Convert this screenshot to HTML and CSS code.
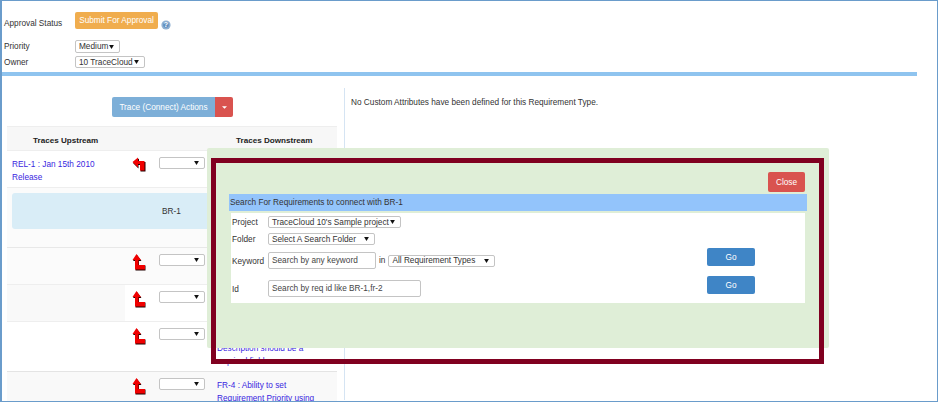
FILE: index.html
```html
<!DOCTYPE html>
<html lang="en">
<head>
<meta charset="utf-8">
<title>Requirement BR-1</title>
<link rel="stylesheet" href="styles.css">
</head>
<body>
<div class="frame">
  <header class="top">
    <div class="status-row">
      <span class="label">Approval Status</span>
      <button class="btn btn-orange">Submit For Approval</button>
      <svg class="help" viewBox="0 0 10 10"><circle cx="5" cy="5" r="4.6" fill="#8fb0d2"/><circle cx="5" cy="5" r="2.8" fill="#5f8fc0"/><text x="5" y="7.4" text-anchor="middle" class="help-q">?</text></svg>
    </div>
    <div class="field-row">
      <span class="label">Priority</span>
      <span class="sel sel-priority">Medium<svg class="caret" viewBox="0 0 6 5"><path d="M0 0h6L3 5z"/></svg></span>
    </div>
    <div class="field-row field-row-owner">
      <span class="label">Owner</span>
      <span class="sel sel-owner">10 TraceCloud<svg class="caret" viewBox="0 0 6 5"><path d="M0 0h6L3 5z"/></svg></span>
    </div>
  </header>
  <div class="rule"></div>
  <main class="content">
    <section class="left">
      <div class="actions">
        <button class="btn btn-trace">Trace (Connect) Actions</button>
        <button class="btn btn-drop"><svg class="drop-caret" viewBox="0 0 6 3"><path d="M0 0h6L3 3z"/></svg></button>
      </div>
      <div class="trace-table">
        <div class="row row-head">
          <div class="cell-up">Traces Upstream</div>
          <div></div>
          <div></div>
          <div class="cell-down">Traces Downstream</div>
        </div>
        <div class="row row-1">
          <div class="cell-up"><a class="link">REL-1 : Jan 15th 2010 Release</a></div>
          <div class="cell-icon"><svg class="arrow" viewBox="0 0 14 15"><path class="arrow-shadow" d="M7 1.500v3.500h6.500v9.500h-5v-6.500h-2v3.500l-5.500-5.500z"/><path class="arrow-fill" d="M6 0.500v3.500h6.500v9.500h-4.500v-6.500h-2v3.500l-5.500-5.500z"/></svg></div>
          <div class="cell-sel"><span class="sel sel-empty"><svg class="caret" viewBox="0 0 6 5"><path d="M0 0h6L3 5z"/></svg></span></div>
          <div></div>
        </div>
        <div class="row-self"><div class="self-panel">BR-1</div></div>
        <div class="row row-3">
          <div></div>
          <div class="cell-icon"><svg class="arrow arrow-up" viewBox="0 0 14 17"><path class="arrow-shadow" d="M5 1l4.500 6h-2.500v4.500h6.500v5h-10v-9.500h-2.500z"/><path class="arrow-fill" d="M4.500 0l4.500 6h-2.500v5h6.500v4.500h-10v-9.500h-2.500z"/></svg></div>
          <div class="cell-sel"><span class="sel sel-empty"><svg class="caret" viewBox="0 0 6 5"><path d="M0 0h6L3 5z"/></svg></span></div>
          <div></div>
        </div>
        <div class="row row-4">
          <div class="row-4-fill"></div>
          <div class="cell-icon"><svg class="arrow arrow-up" viewBox="0 0 14 17"><path class="arrow-shadow" d="M5 1l4.500 6h-2.500v4.500h6.500v5h-10v-9.500h-2.500z"/><path class="arrow-fill" d="M4.500 0l4.500 6h-2.500v5h6.500v4.500h-10v-9.500h-2.500z"/></svg></div>
          <div class="cell-sel"><span class="sel sel-empty"><svg class="caret" viewBox="0 0 6 5"><path d="M0 0h6L3 5z"/></svg></span></div>
          <div></div>
        </div>
        <div class="row row-5">
          <div></div>
          <div class="cell-icon"><svg class="arrow arrow-up" viewBox="0 0 14 17"><path class="arrow-shadow" d="M5 1l4.500 6h-2.500v4.500h6.500v5h-10v-9.500h-2.500z"/><path class="arrow-fill" d="M4.500 0l4.500 6h-2.500v5h6.500v4.500h-10v-9.500h-2.500z"/></svg></div>
          <div class="cell-sel"><span class="sel sel-empty"><svg class="caret" viewBox="0 0 6 5"><path d="M0 0h6L3 5z"/></svg></span></div>
          <div class="cell-down"><a class="link">FR-3 : Requirement<br>Description should be a<br>required field</a></div>
        </div>
        <div class="row row-6">
          <div></div>
          <div class="cell-icon"><svg class="arrow arrow-up" viewBox="0 0 14 17"><path class="arrow-shadow" d="M5 1l4.500 6h-2.500v4.500h6.500v5h-10v-9.500h-2.500z"/><path class="arrow-fill" d="M4.500 0l4.500 6h-2.500v5h6.500v4.500h-10v-9.500h-2.500z"/></svg></div>
          <div class="cell-sel"><span class="sel sel-empty"><svg class="caret" viewBox="0 0 6 5"><path d="M0 0h6L3 5z"/></svg></span></div>
          <div class="cell-down"><a class="link">FR-4 : Ability to set Requirement Priority using</a></div>
        </div>
      </div>
    </section>
    <section class="right">No Custom Attributes have been defined for this Requirement Type.</section>
  </main>

  <div class="modal">
    <div class="modal-head"><button class="btn btn-close">Close</button></div>
    <div class="search-title">Search For Requirements to connect with BR-1</div>
    <div class="search-body">
      <div class="search-fields">
        <div class="search-row search-row-project">
          <span class="search-label">Project</span>
          <span class="sel sel-project">TraceCloud 10's Sample project<svg class="caret" viewBox="0 0 6 5"><path d="M0 0h6L3 5z"/></svg></span>
        </div>
        <div class="search-row search-row-folder">
          <span class="search-label">Folder</span>
          <span class="sel sel-folder">Select A Search Folder<svg class="caret" viewBox="0 0 6 5"><path d="M0 0h6L3 5z"/></svg></span>
        </div>
        <div class="search-row search-row-keyword">
          <span class="search-label">Keyword</span>
          <span class="input input-keyword">Search by any keyword</span>
          <span class="in-word">in</span>
          <span class="sel sel-types">All Requirement Types<svg class="caret" viewBox="0 0 6 5"><path d="M0 0h6L3 5z"/></svg></span>
        </div>
        <div class="search-row search-row-id">
          <span class="search-label">Id</span>
          <span class="input input-id">Search by req id like BR-1,fr-2</span>
        </div>
      </div>
      <div class="search-go">
        <button class="btn btn-go">Go</button>
        <button class="btn btn-go">Go</button>
      </div>
    </div>
  </div>
  <div class="highlight"></div>
</div>
</body>
</html>
```
FILE: styles.css
```css
* { box-sizing: border-box; }
html, body { margin: 0; padding: 0; background: #fff; }
body { font-family: "Liberation Sans", Arial, sans-serif; font-size: 8.25px; color: #333; }
.frame { position: relative; width: 938px; height: 402px; overflow: hidden; border: 1px solid #6a9ccb; border-left-width: 2px; padding-top: 11px; }
.btn { font-family: inherit; border: 0; color: #fff; padding: 0; display: flex; align-items: center; justify-content: center; font-size: 8.25px; }
.label { width: 73px; flex: none; padding-left: 2px; color: #333; }
.status-row { display: flex; align-items: flex-start; height: 18px; }
.status-row .label { padding-top: 7px; }
.btn-orange { width: 83px; height: 17px; background: #f0ad4e; border-radius: 2px; }
.help { width: 10px; height: 10px; margin: 8px 0 0 3px; }
.help-q { font-size: 7px; font-weight: bold; fill: #fff; }
.field-row { display: flex; align-items: center; height: 13px; margin-top: 10px; }
.field-row-owner { height: 12px; margin-top: 3px; }
.sel { display: inline-flex; align-items: center; justify-content: space-between; height: 12px; background: #fff; border: 1px solid #c4c4c4; border-radius: 2px; padding: 0 5px 0 3px; color: #333; white-space: nowrap; }
.caret { width: 5px; height: 4px; fill: #111; flex: none; }
.sel-priority { width: 45px; height: 13px; }
.sel-owner { width: 70px; }
.rule { height: 4px; margin-top: 4px; margin-right: 20px; background: #8fc4ef; }
.content { display: flex; }
.left { width: 343px; height: 312px; margin-top: 12px; border-right: 1px solid #d5e4f3; padding: 9px 7px 0 5px; flex: none; }
.right { padding: 22px 0 0 6px; }
.actions { display: flex; justify-content: flex-start; margin-left: 105px; height: 20px; }
.btn-trace { width: 103px; height: 20px; background: #7dafd8; border-radius: 2px 0 0 2px; }
.btn-drop { width: 18px; height: 20px; background: #d9534f; border-radius: 0 2px 2px 0; }
.drop-caret { width: 5px; height: 3px; fill: #fff; }
.trace-table { margin-top: 9px; }
.row { display: grid; grid-template-columns: 118px 30px 57px 1fr; border-bottom: 1px solid #eee; }
.cell-up { padding: 7px 8px 0 5px; line-height: 13.400px; }
.cell-down { padding: 7px 8px 0 5px; line-height: 13.200px; }
.row-head { height: 25px; background: #f7f7f7; border-top: 1px solid #eee; font-weight: 700; font-size: 8.100px; color: #222; }
.row-head .cell-up { padding: 7px 0 0 26px; }
.row-head .cell-down { padding: 7px 0 0 24px; }
.link { color: #3a1fe0; }
.row-1 { height: 37px; }
.cell-icon { padding: 6px 0 0 7px; }
.cell-sel { padding: 6px 0 0 4px; }
.sel-empty { width: 46px; height: 12px; justify-content: flex-end; }
.arrow { width: 14px; height: 15px; display: block; }
.arrow-up { width: 14px; height: 17px; }
.arrow-fill { fill: #f00000; }
.arrow-shadow { fill: #200000; }
.row-self { height: 60px; padding: 5px 0 0 5px; border-bottom: 1px solid #e8e8e8; background: #fbfbfb; }
.self-panel { height: 36px; width: 300px; padding-left: 150px; line-height: 37px; background: #d9edf7; border-radius: 3px; color: #333; }
.row-3 { height: 37px; background: #fbfbfb; }
.row-4 { height: 37px; }
.row-4-fill { background: #f9f9f9; }
.row-5 { height: 50px; border-bottom: 1px solid #e4e4e4; }
.row-6 { height: 40px; background: #f9f9f9; }
.modal { position: absolute; left: 205px; top: 147px; width: 622px; height: 200px; background: #dfeed7; border-radius: 2px; padding: 24px 0 0 22px; }
.modal-head { display: flex; justify-content: flex-end; height: 20px; padding-right: 24px; }
.btn-close { width: 37px; height: 20px; background: #d9534f; border-radius: 2px; }
.search-title { width: 578px; height: 17px; margin-top: 2px; padding-left: 1px; line-height: 17px; background: #93c4fb; color: #333; }
.search-body { display: flex; width: 574px; height: 90px; margin: 2px 0 0 2px; background: #fff; }
.search-fields { width: 476px; flex: none; padding-left: 1px; }
.search-row { display: flex; align-items: center; }
.search-label { width: 36px; flex: none; }
.search-row-keyword .search-label, .search-row-id .search-label { padding-top: 2px; }
.search-row-project { margin-top: 3px; height: 12px; }
.search-row-folder { margin-top: 5px; height: 12px; }
.search-row-keyword { margin-top: 7px; height: 17px; }
.search-row-id { margin-top: 11px; height: 17px; }
.sel-project { width: 133px; }
.sel-folder { width: 107px; }
.sel-types { width: 107px; }
.input { display: block; height: 17px; line-height: 15px; border: 1px solid #c4c4c4; border-radius: 2px; padding: 0 3px; background: #fff; color: #444; white-space: nowrap; }
.input-keyword { width: 108px; }
.input-id { width: 153px; }
.in-word { margin: 0 3px; }
.search-go { display: flex; flex-direction: column; padding-top: 35px; gap: 10px; }
.btn-go { width: 48px; height: 18px; background: #3f85c6; border-radius: 2px; }
.highlight { position: absolute; left: 209px; top: 157px; width: 613px; height: 206px; border: 5px solid #800020; }
```
